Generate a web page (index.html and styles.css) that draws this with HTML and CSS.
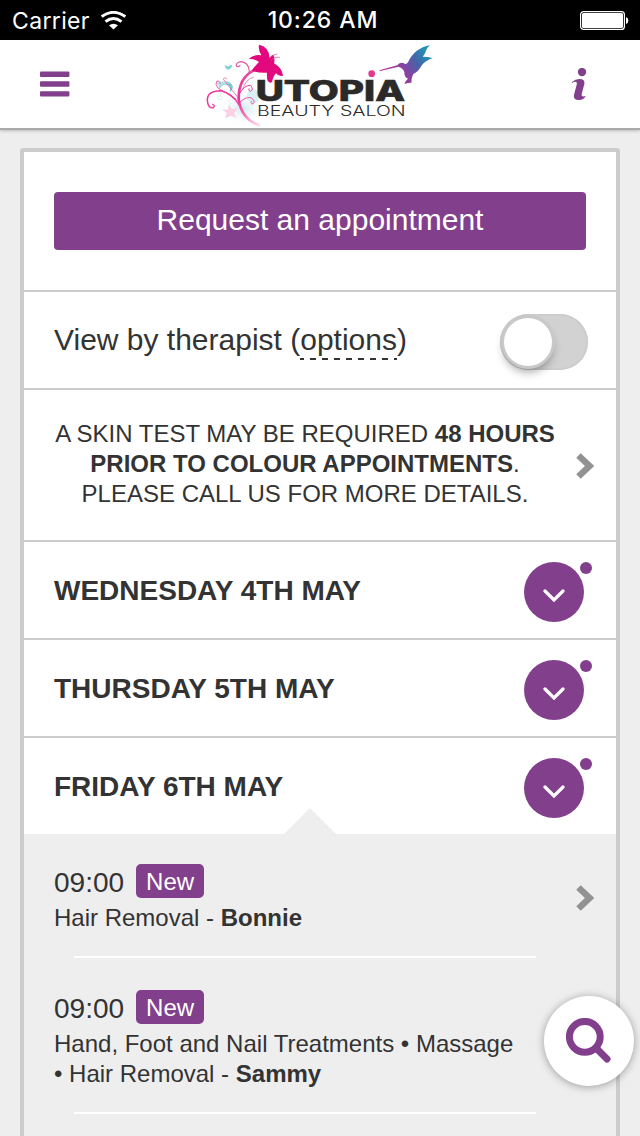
FILE: index.html
```html
<!DOCTYPE html>
<html lang="en">
  <head>
    <meta charset="UTF-8">
    <meta name="viewport" content="width=device-width, initial-scale=1.0">
    <title>Utopia Beauty Salon</title>
    <link rel="stylesheet" href="styles.css">
  </head>
  <body>
    <div class="status-bar">
      <div class="carrier">
        <span class="carrier-name">Carrier</span>
        <svg class="wifi" viewBox="0 0 72 54">
          <path d="M2 16Q36 -9 70 16" fill="none" stroke="#fff" stroke-width="8.5"/>
          <path d="M13 30Q36 12 59 30" fill="none" stroke="#fff" stroke-width="8.5"/>
          <path d="M23 41Q36 31 49 41L36 53Z" fill="#fff"/>
        </svg>
      </div>
      <div class="clock">10:26 AM</div>
      <svg class="battery" viewBox="0 0 49 19">
        <rect x="0.6" y="0.6" width="43.8" height="17.8" rx="3" fill="none" stroke="#fff" stroke-width="1.2"/>
        <rect x="2" y="2" width="41" height="15" rx="1.5" fill="#fff"/>
        <path d="M46 6a3 3.6 0 0 1 0 7z" fill="#fff"/>
      </svg>
    </div>

    <header class="header">
      <svg class="menu-icon" viewBox="0 0 30 26">
        <rect x="0" y="0.5" width="29.4" height="5.4" rx="1"/>
        <rect x="0" y="10.3" width="29.4" height="5.4" rx="1"/>
        <rect x="0" y="20.2" width="29.4" height="5.4" rx="1"/>
      </svg>

      <svg class="logo" viewBox="0 0 720 270">
        <defs>
          <linearGradient id="bird" x1="540" y1="120" x2="690" y2="20" gradientUnits="userSpaceOnUse">
            <stop offset="0" stop-color="#d0208f"/>
            <stop offset="0.42" stop-color="#8c3fa0"/>
            <stop offset="0.68" stop-color="#4565ab"/>
            <stop offset="1" stop-color="#14a5b5"/>
          </linearGradient>
          <linearGradient id="stem" x1="0" y1="80" x2="0" y2="262" gradientUnits="userSpaceOnUse">
            <stop offset="0" stop-color="#e0559f"/>
            <stop offset="0.55" stop-color="#ee2f9a"/>
            <stop offset="0.8" stop-color="#f673b8"/>
            <stop offset="1" stop-color="#fff0f7"/>
          </linearGradient>
          <radialGradient id="haze">
            <stop offset="0" stop-color="#cfeaee"/>
            <stop offset="1" stop-color="#fff" stop-opacity="0"/>
          </radialGradient>
        </defs>

        <!-- background swirls -->
        <ellipse cx="128" cy="205" rx="72" ry="56" fill="url(#haze)"/>
        <circle cx="160" cy="168" r="20" fill="#d9f0f2"/>
        <circle cx="60" cy="173" r="6" fill="none" stroke="#cdebee" stroke-width="2"/>
        <path d="M58 136q26 -24 40 2q2 11 -10 20q8 -22 -8 -24q-14 -2 -22 14z" fill="#6fc9cf"/>
        <path d="M48 130q24 -14 42 2q-22 -4 -30 10z" fill="#b5e1e5"/>
        <path d="M74 74q8 8 14 4q4 -4 9 -3q-2 12 -13 14q-8 -2 -10 -15z" fill="#7fd0d5"/>
        <path d="M88 192l7 15 18 -2 -11 14 8 15 -18 -7 -17 9 5 -17 -14 -11 17 1z" fill="#fbd0e3"/>

        <!-- stem and tendrils -->
        <g fill="none" stroke="url(#stem)" stroke-linecap="round">
          <path d="M160 92Q115 115 116 178Q124 236 176 256" stroke-width="8"/>
          <path d="M118 196Q98 160 62 152Q22 152 22 180Q23 204 38 204Q48 198 38 193" stroke-width="4.5"/>
          <path d="M148 94Q146 68 124 65Q108 66 109 78Q116 83 120 76" stroke-width="3.5"/>
          <path d="M108 178Q78 158 54 144Q44 132 50 124Q60 121 60 130" stroke-width="2.5"/>
          <path d="M112 170Q90 144 70 118Q72 110 80 116" stroke-width="2"/>
          <path d="M118 162Q134 134 152 136Q162 150 151 154Q143 151 147 146" stroke-width="3"/>
          <path d="M120 186Q140 168 154 174Q168 184 159 192Q150 192 154 184" stroke-width="2.5"/>
          <path d="M128 148Q138 116 160 112" stroke-width="2"/>
        </g>

        <!-- lily -->
        <path d="M177 14Q207 20 209 54Q212 46 220 44Q226 58 222 70Q246 84 249 107Q237 111 228 100Q220 108 216 126Q208 132 202 121Q200 107 201 98Q178 100 155 92Q168 74 177 66Q164 56 146 57Q162 42 184 46Q174 30 177 14Z" fill="#e3087e"/>
        <path d="M212 62Q222 50 240 52M206 56Q216 44 232 42" fill="none" stroke="#d9488f" stroke-width="2"/>

        <text class="logo-name" x="167" y="184" textLength="448" lengthAdjust="spacingAndGlyphs">UTOPIA</text>
        <text class="logo-sub" x="171" y="227" textLength="446" lengthAdjust="spacingAndGlyphs">BEAUTY SALON</text>
        <circle cx="515" cy="101" r="10" fill="#e23a8c"/>

        <!-- hummingbird -->
        <path d="M538 91L592 76Q598 66 610 69Q618 76 624 67Q644 24 690 16Q680 24 678 32Q676 40 668 50Q684 50 698 54Q672 64 664 78Q656 94 640 102Q634 112 634 128L624 129L613 132Q616 122 624 116Q612 112 613 96Q610 86 596 80L540 93Z" fill="url(#bird)"/>
      </svg>

      <svg class="info-icon" viewBox="0 0 44 96">
        <circle cx="30" cy="12" r="12.5"/>
        <path d="M0 42Q10 33 22 33Q40 33 37 48L29 78Q27 88 41 84Q36 96 20 96Q3 96 6 80L14 50Q16 40 10 41Q5 41 1 45Z"/>
      </svg>
    </header>

    <main class="card">
      <section class="row request">
        <button class="request-button">Request an appointment</button>
      </section>

      <section class="row therapist">
        <div class="therapist-label">View by therapist (<a class="options">options</a>)</div>
        <div class="toggle"><div class="toggle-knob"></div></div>
      </section>

      <section class="row notice">
        <p class="notice-text">A SKIN TEST MAY BE REQUIRED <b>48 HOURS PRIOR TO COLOUR APPOINTMENTS</b>. PLEASE CALL US FOR MORE DETAILS.</p>
        <svg class="chevron" viewBox="0 0 18 26"><path d="M2.5 2.5L13.5 13L2.5 23.5"/></svg>
      </section>

      <section class="row day">
        <h2 class="day-name">WEDNESDAY 4TH MAY</h2>
        <div class="expand"><svg viewBox="0 0 22 13"><path d="M2 2L11 11L20 2"/></svg></div>
      </section>
      <section class="row day">
        <h2 class="day-name">THURSDAY 5TH MAY</h2>
        <div class="expand"><svg viewBox="0 0 22 13"><path d="M2 2L11 11L20 2"/></svg></div>
      </section>
      <section class="row day open">
        <h2 class="day-name">FRIDAY 6TH MAY</h2>
        <div class="expand"><svg viewBox="0 0 22 13"><path d="M2 2L11 11L20 2"/></svg></div>
      </section>

      <div class="slots">
        <div class="slot">
          <div class="slot-body">
            <div class="slot-head"><span class="time">09:00</span><span class="badge">New</span></div>
            <div class="slot-desc">Hair Removal - <b>Bonnie</b></div>
          </div>
          <svg class="chevron" viewBox="0 0 18 26"><path d="M2.5 2.5L13.5 13L2.5 23.5"/></svg>
        </div>
        <div class="slot">
          <div class="slot-body">
            <div class="slot-head"><span class="time">09:00</span><span class="badge">New</span></div>
            <div class="slot-desc">Hand, Foot and Nail Treatments • Massage • Hair Removal - <b>Sammy</b></div>
          </div>
        </div>
      </div>
    </main>

    <div class="search">
      <svg viewBox="0 0 45 45">
        <circle cx="18.8" cy="18.8" r="15.4" fill="none" stroke-width="7"/>
        <path d="M30.5 30.5L41 41" stroke-width="7" stroke-linecap="round"/>
      </svg>
    </div>
  </body>
</html>
```
FILE: styles.css
```css
:root {
  --purple: #823f8c;
  --text: #333;
  --line: #ccc;
  --grey: #eee;
}

* {
  box-sizing: border-box;
}

body {
  margin: 0;
  height: 1136px;
  overflow: hidden;
  display: flex;
  flex-direction: column;
  font-family: "Liberation Sans", Arial, sans-serif;
  color: var(--text);
  background: var(--grey);
}

svg {
  display: block;
}

/* Status bar */
.status-bar {
  flex: none;
  display: grid;
  grid-template-columns: 1fr auto 1fr;
  align-items: center;
  height: 40px;
  padding: 0 11px 0 12px;
  background: #000;
  color: #fff;
  font-family: Inter, sans-serif;
}

.carrier {
  display: flex;
  align-items: center;
  gap: 11px;
}

.carrier-name {
  padding-top: 2px;
  font-size: 23px;
  letter-spacing: 0.35px;
}

.wifi {
  width: 25px;
  height: 19px;
}

.clock {
  padding-left: 5px;
  font-size: 23px;
  font-weight: 500;
  letter-spacing: 0.9px;
}

.battery {
  justify-self: end;
  width: 49px;
  height: 19px;
}

/* Header */
.header {
  flex: none;
  display: flex;
  align-items: center;
  height: 88px;
  padding-left: 40px;
  background: #fff;
  box-shadow: 0 2px 0 #aaa, 0 3px 3px #bbb;
}

.menu-icon {
  width: 30px;
  height: 26px;
  fill: var(--purple);
}

.logo {
  width: 240px;
  height: 90px;
  margin: 2px 0 0 130px;
}

.logo-name {
  font-family: Inter, sans-serif;
  font-size: 84px;
  font-weight: 800;
  fill: #2b2a29;
  stroke: #2b2a29;
  stroke-width: 2;
}

.logo-sub {
  font-family: Inter, sans-serif;
  font-size: 42px;
  font-weight: 300;
  fill: #2b2a29;
}

.info-icon {
  width: 14.7px;
  height: 32px;
  margin: -1px 0 0 132px;
  fill: var(--purple);
}

/* Card */
.card {
  flex: 1;
  display: flex;
  flex-direction: column;
  margin: 20px 20px 0;
  border: 4px solid var(--line);
  border-bottom: 0;
  border-radius: 4px 4px 0 0;
  background: #fff;
}

.row {
  flex: none;
  display: flex;
  align-items: center;
  justify-content: space-between;
  padding: 0 30px;
  border-bottom: 2px solid var(--line);
}

.request {
  height: 140px;
}

.request-button {
  width: 100%;
  height: 58px;
  padding: 0 0 2px;
  border: 0;
  border-radius: 4px;
  background: var(--purple);
  color: #fff;
  font: 30px "Liberation Sans", Arial, sans-serif;
}

.therapist {
  height: 98px;
  padding-right: 28px;
}

.therapist-label {
  font-size: 30px;
}

.options {
  padding-bottom: 4px;
  background: repeating-linear-gradient(90deg, var(--text) 0 4px, transparent 4px 10px, var(--text) 10px 12px) 0 100% / 100% 2px no-repeat;
}

.toggle {
  width: 88px;
  height: 56px;
  margin-top: 4px;
  padding: 4px;
  border-radius: 28px;
  background: #d2d2d2;
  box-shadow: inset 0 0 0 2px #cdcdcd;
}

.toggle-knob {
  width: 48px;
  height: 48px;
  border-radius: 50%;
  background: #fff;
  box-shadow: 0 0 0 3px #c8c8c8, 0 6px 10px rgba(0, 0, 0, 0.35);
}

.notice {
  height: 152px;
  padding: 1px 22px 0 30px;
}

.notice-text {
  width: 502px;
  margin: 0 0 3px;
  font-size: 24px;
  line-height: 30px;
  text-align: center;
}

.chevron {
  width: 18px;
  height: 26px;
  fill: none;
  stroke: #929292;
  stroke-width: 6.5;
}

.day {
  height: 98px;
  padding-right: 32px;
}

.day-name {
  margin: 2px 0 0;
  font-size: 28px;
}

.expand {
  position: relative;
  display: flex;
  align-items: center;
  justify-content: center;
  width: 60px;
  height: 60px;
  margin-top: 4px;
  border-radius: 50%;
  background: var(--purple);
}

.expand svg {
  width: 22px;
  height: 13px;
  margin-top: 6px;
  fill: none;
  stroke: #fff;
  stroke-width: 3.2;
  stroke-linecap: round;
}

/* availability dot */
.expand::after {
  content: "";
  position: absolute;
  top: 0;
  right: -8px;
  width: 12px;
  height: 12px;
  border-radius: 50%;
  background: var(--purple);
}

.open {
  position: relative;
  height: 96px;
  border-bottom: 0;
}

.open::after {
  content: "";
  position: absolute;
  left: 260px;
  bottom: 0;
  border: 26px solid transparent;
  border-top: 0;
  border-bottom-color: var(--grey);
}

/* Appointment slots */
.slots {
  flex: 1;
  padding: 0 22px 0 30px;
  background: var(--grey);
}

.slot {
  display: flex;
  align-items: center;
  justify-content: space-between;
  padding: 32px 0 25px;
  background: linear-gradient(#fff, #fff) 20px 100% / 462px 2px no-repeat;
}

.slot:first-child {
  padding-top: 30px;
}

.slot .chevron {
  margin-bottom: 2px;
}

.slot-body {
  width: 470px;
}

.slot-head {
  display: flex;
  align-items: center;
  gap: 12px;
  height: 34px;
}

.time {
  padding-top: 3px;
  font-size: 28px;
}

.badge {
  height: 34px;
  padding: 0 10px;
  border-radius: 5px;
  background: var(--purple);
  color: #fff;
  font-size: 24px;
  line-height: 36px;
}

.slot-desc {
  margin-top: 5px;
  font-size: 24px;
  line-height: 30px;
}

/* Floating search button */
.search {
  position: fixed;
  right: 6px;
  bottom: 50px;
  width: 90px;
  height: 90px;
  padding: 22px;
  border-radius: 50%;
  background: #fff;
  box-shadow: 0 1px 8px rgba(0, 0, 0, 0.35);
}

.search svg {
  width: 45px;
  height: 45px;
  stroke: var(--purple);
}
```
